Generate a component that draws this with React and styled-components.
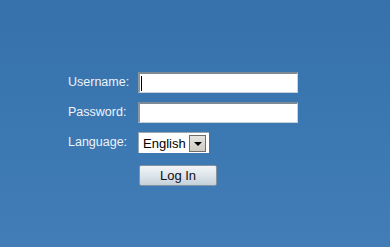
import React from 'react'
import styled, { createGlobalStyle } from 'styled-components'

const Global = createGlobalStyle`
html, body { margin:0; padding:0; }
body { font-family: "Liberation Sans", Arial, sans-serif; }
`;

const Page = styled.div`
width:390px;
height:247px;
box-sizing:border-box;
padding:72px 0 0 68px;
background: linear-gradient(180deg, #3671ab 0%, #3b77b1 50%, #427db8 100%);
`;

const Form = styled.div`
display:grid;
grid-template-columns:70px auto;
row-gap:9px;
align-items:center;
`;

const Label = styled.span`
color:#eef3f8;
font-size:12.5px;
line-height:21px;
`;

const Field = styled.div`
width:160px;
height:21px;
box-sizing:border-box;
background:#fff;
border-top:2px solid #7d8994;
border-left:2px solid #8a96a0;
border-right:1px solid #c8d2da;
border-bottom:1px solid #c8d2da;
display:flex;
align-items:center;
padding-left:1px;
`;

const Caret = styled.span`
width:1px;
height:15px;
background:#000;
`;

const Select = styled.div`
width:71px;
height:21px;
box-sizing:border-box;
background:#fff;
border-top:1px solid #9aa6b0;
border-left:1px solid #9aa6b0;
display:flex;
align-items:center;
justify-content:space-between;
padding:0 3px 0 4px;
font-size:13px;
color:#000;
`;

const Arrow = styled.span`
width:17px;
height:17px;
box-sizing:border-box;
border:1px solid #6e6e6e;
background:linear-gradient(180deg,#e6e4df,#cfccc4);
display:flex;
align-items:center;
justify-content:center;
&::after{
  content:'';
  border-left:4px solid transparent;
  border-right:4px solid transparent;
  border-top:4px solid #000;
  margin-top:2px;
}
`;

const Button = styled.button`
grid-column:2;
margin-top:3px;
margin-left:1px;
width:78px;
height:21px;
border:1px solid #8593a0;
border-radius:2px;
background:linear-gradient(180deg,#f2f5f7 0%,#dde5eb 50%,#c5d1da 100%);
font-family:"Liberation Sans", Arial, sans-serif;
font-size:13px;
color:#111;
padding:0;
`;

const App = () => {
    return (
        <>
            <Global />
            <Page>
                <Form>
                    <Label>Username:</Label>
                    <Field><Caret /></Field>
                    <Label>Password:</Label>
                    <Field />
                    <Label>Language:</Label>
                    <div><Select>English<Arrow /></Select></div>
                    <Button>Log In</Button>
                </Form>
            </Page>
        </>
    )
}

export default App
